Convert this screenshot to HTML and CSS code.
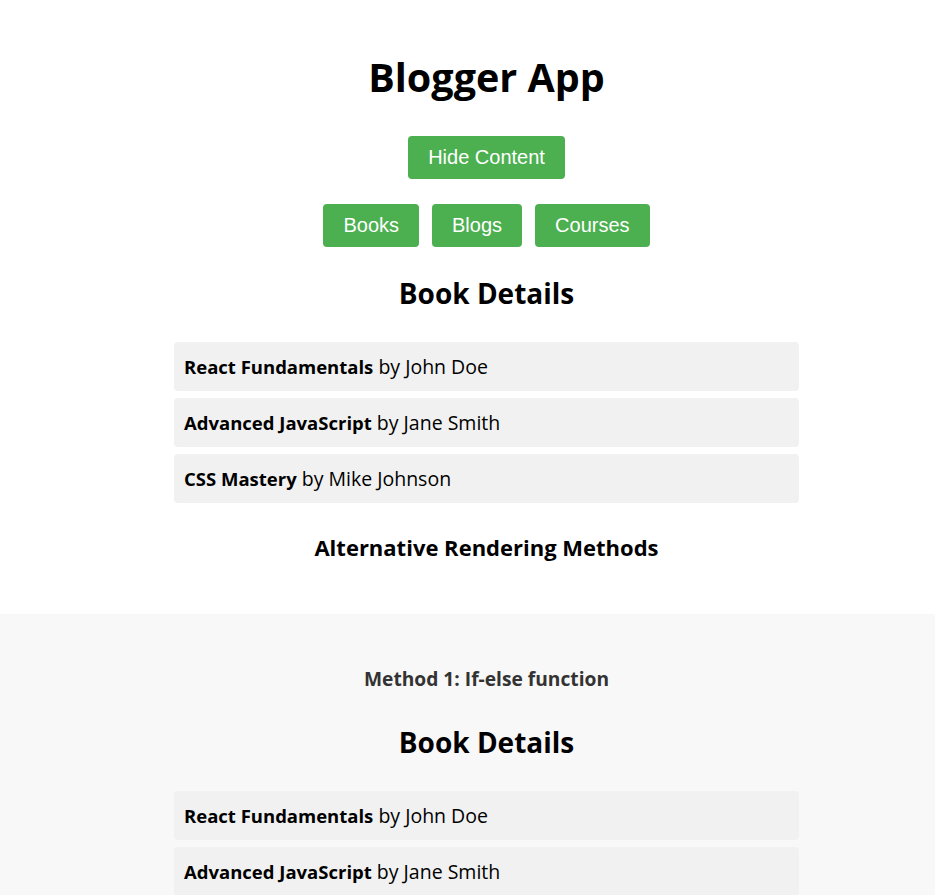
FILE: index.html
```html
<!DOCTYPE html>
<html lang="en">
<head>
<meta charset="utf-8">
<title>Blogger App</title>
<link rel="stylesheet" href="styles.css">
</head>
<body>
<div class="page">
  <h1 class="title">Blogger App</h1>
  <button class="btn">Hide Content</button>
  <nav class="tabs">
    <button class="btn">Books</button>
    <button class="btn">Blogs</button>
    <button class="btn">Courses</button>
  </nav>
  <section class="details">
    <h2 class="details-title">Book Details</h2>
    <ul class="items">
      <li class="item"><strong class="book">React Fundamentals</strong> by John Doe</li>
      <li class="item"><strong class="book">Advanced JavaScript</strong> by Jane Smith</li>
      <li class="item"><strong class="book">CSS Mastery</strong> by Mike Johnson</li>
    </ul>
  </section>
  <h3 class="alt-title">Alternative Rendering Methods</h3>
  <section class="method">
    <h4 class="method-title">Method 1: If-else function</h4>
    <section class="details details-in-method">
      <h2 class="details-title">Book Details</h2>
      <ul class="items">
        <li class="item"><strong class="book">React Fundamentals</strong> by John Doe</li>
        <li class="item"><strong class="book">Advanced JavaScript</strong> by Jane Smith</li>
        <li class="item"><strong class="book">CSS Mastery</strong> by Mike Johnson</li>
      </ul>
    </section>
  </section>
</div>
</body>
</html>
```

FILE: styles.css
```css
html, body {
  margin: 0;
  padding: 0;
  background: #ffffff;
}

body {
  font-family: "Open Sans", "Noto Sans", sans-serif;
  color: #000;
  overflow: hidden;
}

.page {
  width: 973px;
  display: flex;
  flex-direction: column;
  align-items: center;
  text-align: center;
}

.title {
  margin: 54px 0 36px;
  font-size: 39.5px;
  line-height: 46px;
  font-weight: 700;
}

.btn {
  font-family: "Liberation Sans", Arial, sans-serif;
  font-size: 20px;
  line-height: 23px;
  padding: 10px 20px;
  background: #4CAF50;
  color: #fff;
  border: none;
  border-radius: 4px;
  cursor: pointer;
}

.tabs {
  display: flex;
  gap: 13px;
  margin-top: 25px;
}

.details {
  width: 625px;
  margin-top: 29px;
}

.details-title {
  margin: 0 0 32px;
  font-size: 28px;
  line-height: 34px;
  font-weight: 700;
}

.items {
  list-style: none;
  margin: 0;
  padding: 0;
  display: flex;
  flex-direction: column;
  gap: 7px;
}

.item {
  text-align: left;
  background: #f1f1f1;
  border-radius: 4px;
  padding: 12px 10px;
  font-size: 19.5px;
  line-height: 25px;
}

.book {
  font-size: 18.5px;
  font-weight: 700;
}

.alt-title {
  margin: 30px 0 0;
  font-size: 22px;
  line-height: 28px;
  font-weight: 700;
}

.method {
  width: 100%;
  margin-top: 53px;
  background: #f8f8f8;
  padding-top: 53px;
  padding-bottom: 40px;
  display: flex;
  flex-direction: column;
  align-items: center;
}

.method-title {
  margin: 0;
  font-size: 19.2px;
  line-height: 24px;
  font-weight: 700;
  color: #333;
}

.details-in-method {
  margin-top: 34px;
}
```
